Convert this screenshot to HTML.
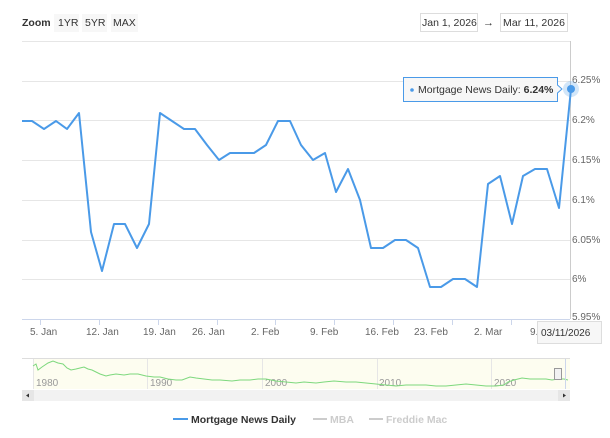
<!DOCTYPE html>
<html><head><style>
body{margin:0;background:#fff;width:610px;height:433px;overflow:hidden;font-family:"Liberation Sans",sans-serif}
</style></head><body>
<svg width="610" height="433" xmlns="http://www.w3.org/2000/svg" font-family="Liberation Sans, sans-serif">
<text x="22" y="26" font-size="10.5" fill="#333" font-weight="bold">Zoom</text>
<rect x="54" y="14" width="25" height="18" fill="#f7f7f7"/><text x="58" y="26" font-size="10.5" fill="#333">1YR</text>
<rect x="82" y="14" width="25" height="18" fill="#f7f7f7"/><text x="85" y="26" font-size="10.5" fill="#333">5YR</text>
<rect x="111" y="14" width="27" height="18" fill="#f7f7f7"/><text x="113" y="26" font-size="10.5" fill="#333">MAX</text>
<rect x="420.5" y="13.5" width="57" height="18" fill="#fff" stroke="#ddd"/><text x="422" y="26" font-size="10.5" fill="#333">Jan 1, 2026</text>
<text x="483" y="26" font-size="11" fill="#333">→</text>
<rect x="500.5" y="13.5" width="67" height="18" fill="#fff" stroke="#ddd"/><text x="503" y="26" font-size="10.5" fill="#333" textLength="62">Mar 11, 2026</text>
<g stroke="#e6e6e6" stroke-width="1">
<line x1="22" y1="41.5" x2="570" y2="41.5"/>
<line x1="22" y1="81.5" x2="570" y2="81.5"/>
<line x1="22" y1="120.5" x2="570" y2="120.5"/>
<line x1="22" y1="160.5" x2="570" y2="160.5"/>
<line x1="22" y1="200.5" x2="570" y2="200.5"/>
<line x1="22" y1="240.5" x2="570" y2="240.5"/>
<line x1="22" y1="279.5" x2="570" y2="279.5"/>
</g>
<line x1="22" y1="319.5" x2="570" y2="319.5" stroke="#ccd6eb"/>
<g stroke="#ccd6eb"><line x1="40.5" y1="319" x2="40.5" y2="325"/><line x1="99.5" y1="319" x2="99.5" y2="325"/><line x1="158.5" y1="319" x2="158.5" y2="325"/><line x1="217.5" y1="319" x2="217.5" y2="325"/><line x1="275.5" y1="319" x2="275.5" y2="325"/><line x1="334.5" y1="319" x2="334.5" y2="325"/><line x1="393.5" y1="319" x2="393.5" y2="325"/><line x1="452.5" y1="319" x2="452.5" y2="325"/><line x1="511.5" y1="319" x2="511.5" y2="325"/></g>
<line x1="570.5" y1="41" x2="570.5" y2="319" stroke="#ccc"/>
<g font-size="10" fill="#666">
<text x="572" y="83">6.25%</text><text x="572" y="123">6.2%</text><text x="572" y="163">6.15%</text><text x="572" y="203">6.1%</text><text x="572" y="243">6.05%</text><text x="572" y="282">6%</text><text x="572" y="320">5.95%</text>
<text x="30" y="335">5. Jan</text><text x="86" y="335">12. Jan</text><text x="143" y="335">19. Jan</text><text x="192" y="335">26. Jan</text><text x="251" y="335">2. Feb</text><text x="310" y="335">9. Feb</text><text x="365" y="335">16. Feb</text><text x="414" y="335">23. Feb</text><text x="474" y="335">2. Mar</text><text x="530" y="335">9.</text>
</g>
<polyline fill="none" stroke="#4a9ae8" stroke-width="2" stroke-linejoin="round" points="22,121 32,121 44,129 56,121 67,129 79,113 91,232 102,271 114,224 125,224 137,248 149,224 160,113 172,121 184,129 195,129 207,145 219,160 230,153 242,153 254,153 266,145 278,121 290,121 301,145 313,160 325,153 336,192 348,169 360,200 371,248 383,248 395,240 406,240 418,248 430,287 441,287 453,279 465,279 477,287 488,184 500,176 512,224 523,176 535,169 547,169 559,208 571,89"/>
<circle cx="571" cy="89" r="8" fill="#4a9ae8" fill-opacity="0.25"/>
<circle cx="571" cy="89" r="4" fill="#4a9ae8"/>
<path d="M403.5,77.5 H557.5 V85 L562,89 L557.5,93 V101.5 H403.5 Z" fill="#f7f7f7" fill-opacity="0.95" stroke="#4a9ae8"/>
<circle cx="412" cy="90" r="1.8" fill="#4a9ae8"/>
<text x="418" y="93" font-size="10.5" fill="#333">Mortgage News Daily: <tspan font-weight="bold">6.24%</tspan></text>
<rect x="537.5" y="321.5" width="64" height="22" fill="#f7f7f7" stroke="#ddd"/>
<text x="541" y="336" font-size="10" fill="#333">03/11/2026</text>
<line x1="22" y1="358.5" x2="570" y2="358.5" stroke="#ddd"/>
<rect x="33" y="359" width="537" height="30" fill="#fdfdf0"/>
<g stroke="#e6e6e6"><line x1="33.5" y1="359" x2="33.5" y2="389"/><line x1="147.5" y1="359" x2="147.5" y2="389"/><line x1="262.5" y1="359" x2="262.5" y2="389"/><line x1="377.5" y1="359" x2="377.5" y2="389"/><line x1="491.5" y1="359" x2="491.5" y2="389"/></g>
<g font-size="10" fill="#999"><text x="36" y="386">1980</text><text x="150" y="386">1990</text><text x="265" y="386">2000</text><text x="379" y="386">2010</text><text x="494" y="386">2020</text></g>
<polyline fill="none" stroke="#7dd87d" stroke-width="1" points="33,366 36,364 38,370 42,367 48,363 53,361 58,363 63,364 67,368 71,370 76,369 80,368 84,367 88,369 92,370 96,372 100,374 106,376 110,375 116,374 124,375 130,374 138,374 146,376 154,377 160,377 168,379 176,380 182,380 190,377 196,378 204,379 212,380 220,380 232,381 240,380 250,380 258,379 266,379 276,381 286,382 296,383 304,382 316,383 324,382 334,381 346,382 356,382 366,383 376,384 386,385 396,386 406,385 416,385 426,385 436,386 446,386 456,385 466,384 476,385 486,386 496,386 504,385 508,382 514,380 522,378 530,379 538,379 546,379 552,380 558,379 564,379 568,380"/>
<line x1="565.5" y1="359" x2="565.5" y2="389" stroke="#ccd6eb"/>
<rect x="554.5" y="368.5" width="7" height="11" fill="#f2f2f2" stroke="#999"/>
<rect x="22" y="390" width="548" height="11" fill="#f2f2f2"/>
<rect x="22" y="390" width="12" height="11" fill="#e6e6e6"/>
<rect x="558" y="390" width="12" height="11" fill="#e6e6e6"/>
<path d="M26,395.5 L29,393.5 V397.5 Z" fill="#333"/>
<path d="M566,395.5 L563,393.5 V397.5 Z" fill="#333"/>
<line x1="173" y1="419" x2="188" y2="419" stroke="#4a9ae8" stroke-width="2"/>
<text x="191" y="423" font-size="10.5" fill="#333" font-weight="bold" textLength="105">Mortgage News Daily</text>
<line x1="313" y1="419" x2="327" y2="419" stroke="#ccc" stroke-width="2"/>
<text x="330" y="423" font-size="10.5" fill="#ccc" font-weight="bold">MBA</text>
<line x1="369" y1="419" x2="383" y2="419" stroke="#ccc" stroke-width="2"/>
<text x="386" y="423" font-size="10.5" fill="#ccc" font-weight="bold">Freddie Mac</text>
</svg>
</body></html>
